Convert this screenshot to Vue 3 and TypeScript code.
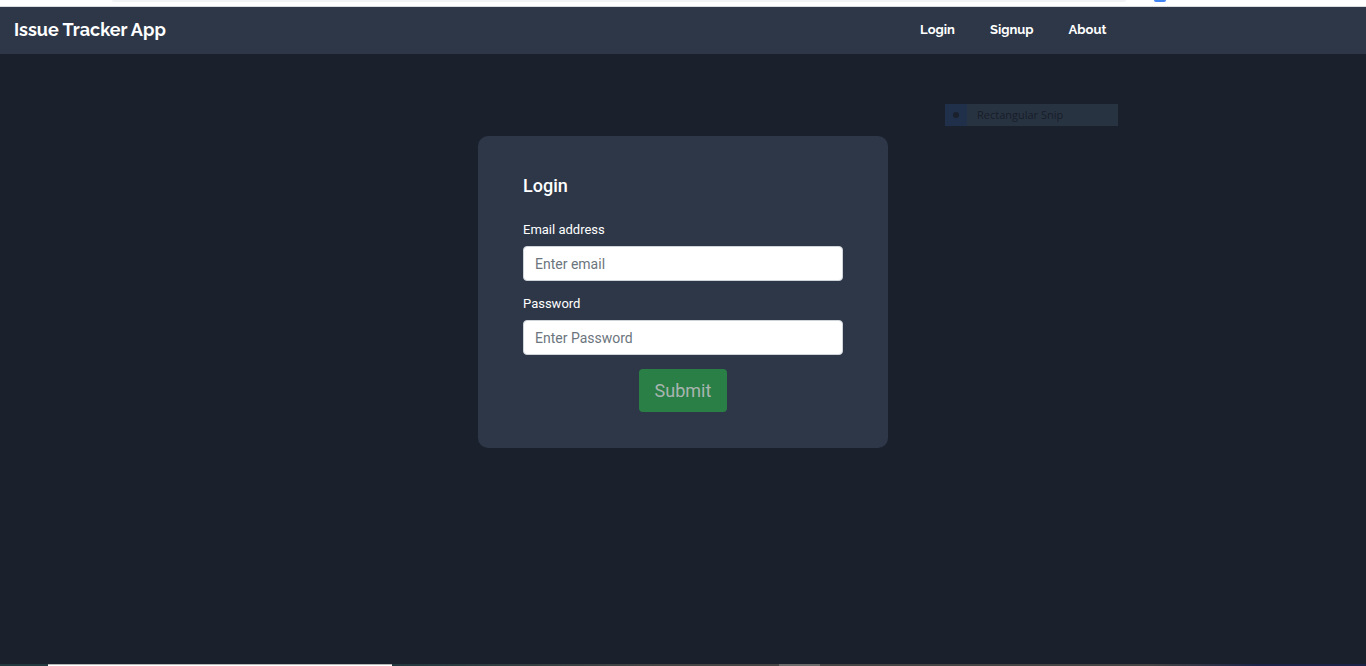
<script setup lang="ts">
import { computed, ref } from 'vue'

interface NavLink {
  label: string
  href: string
}

const links: NavLink[] = [
  { label: 'Login', href: '#login' },
  { label: 'Signup', href: '#signup' },
  { label: 'About', href: '#about' },
]

const email = ref('')
const password = ref('')
const incomplete = computed(() => !email.value || !password.value)
</script>

<template>
  <div class="screen">
    <div class="browser-edge" aria-hidden="true">
      <span class="address-edge"></span>
      <span class="extension-edge"></span>
    </div>

    <header class="navbar">
      <a class="brand" href="#home">Issue Tracker App</a>
      <nav class="links">
        <a v-for="link in links" :key="link.label" :href="link.href">{{ link.label }}</a>
      </nav>
    </header>

    <main class="content">
      <form class="card" @submit.prevent>
        <h1>Login</h1>
        <label for="email">Email address</label>
        <input id="email" v-model="email" type="email" placeholder="Enter email" />
        <label for="password">Password</label>
        <input id="password" v-model="password" type="password" placeholder="Enter Password" />
        <button type="submit" :disabled="incomplete">Submit</button>
      </form>
    </main>

    <div class="snip-menu">
      <span class="snip-mark"><span class="snip-dot"></span></span>
      <span class="snip-label">Rectangular Snip</span>
    </div>

    <div class="taskbar-edge" aria-hidden="true">
      <span class="task-start"></span>
      <span class="task-search"></span>
      <span class="task-apps"></span>
      <span class="task-active"></span>
      <span class="task-tray"></span>
    </div>
  </div>
</template>

<style>
body {
  margin: 0;
  background: #1a202c;
}
</style>

<style scoped>
* {
  box-sizing: border-box;
}

.screen {
  position: relative;
  display: flex;
  flex-direction: column;
  min-height: 100vh;
  background: #1a202c;
  color: #fff;
  font-family: Roboto, sans-serif;
}

.browser-edge {
  display: flex;
  align-items: flex-start;
  height: 7px;
  padding-left: 112px;
  background: #fff;
  border-bottom: 1px solid #dadce0;
}

.address-edge {
  width: 1014px;
  height: 2px;
  border-radius: 0 0 8px 8px;
  background: #f1f3f4;
}

.extension-edge {
  width: 12px;
  height: 2px;
  margin-left: 28px;
  border-radius: 0 0 2px 2px;
  background: #4285f4;
}

.navbar {
  display: flex;
  align-items: center;
  justify-content: space-between;
  height: 47px;
  padding: 0 19% 2px 14px;
  background: #2d3748;
  font-family: Raleway, Lato, sans-serif;
  font-weight: 700;
}

.navbar a {
  color: #fff;
  text-decoration: none;
}

.brand {
  font-size: 18px;
  line-height: 24px;
}

.links {
  display: flex;
  gap: 35px;
  font-size: 13px;
  line-height: 20px;
}

.content {
  display: flex;
  flex: 1;
  align-items: flex-start;
  justify-content: center;
  padding-top: 82px;
}

.card {
  display: flex;
  flex-direction: column;
  width: 410px;
  padding: 36px 45px;
  border-radius: 10px;
  background: #2d3748;
}

h1 {
  margin: 0 0 21px;
  font-size: 18px;
  font-weight: 500;
  line-height: 28px;
}

label {
  margin-bottom: 7px;
  font-size: 13px;
  line-height: 18px;
}

input {
  height: 35px;
  margin: 0 0 14px;
  padding: 0 11px;
  border: 1px solid #ced4da;
  border-radius: 4px;
  background: #fff;
  color: #495057;
  font-family: inherit;
  font-size: 14px;
}

input::placeholder {
  color: #6c757d;
  opacity: 1;
}

button {
  align-self: center;
  height: 43px;
  padding: 0 16px;
  border: 0;
  border-radius: 4px;
  background: #28a745;
  color: #fff;
  font-family: inherit;
  font-size: 18px;
}

button:disabled {
  background: #2a7f46;
  color: #a9b5b0;
}

.snip-menu {
  position: absolute;
  top: 104px;
  left: 945px;
  display: flex;
  width: 173px;
  height: 22px;
  background: #283341;
  color: #171d29;
  font-family: "Open Sans", sans-serif;
  font-size: 11px;
  line-height: 22px;
}

.snip-mark {
  display: flex;
  align-items: center;
  justify-content: center;
  width: 22px;
  background: #20304a;
}

.snip-dot {
  width: 6px;
  height: 6px;
  border-radius: 50%;
  background: #1a202c;
}

.snip-label {
  margin-left: 10px;
}

.taskbar-edge {
  display: flex;
  height: 2px;
  background: #454545;
}

.task-start {
  width: 48px;
  background: #22393f;
}

.task-search {
  width: 344px;
  border-top: 1px solid #b8b8b8;
  background: #fff;
}

.task-apps {
  width: 387px;
  background: linear-gradient(90deg, #22393f, #454545 70%);
}

.task-active {
  width: 41px;
  background: #6b6b6b;
}

.task-tray {
  flex: 1;
  background: linear-gradient(90deg, #454545 60%, #1b2447 80%);
}
</style>
